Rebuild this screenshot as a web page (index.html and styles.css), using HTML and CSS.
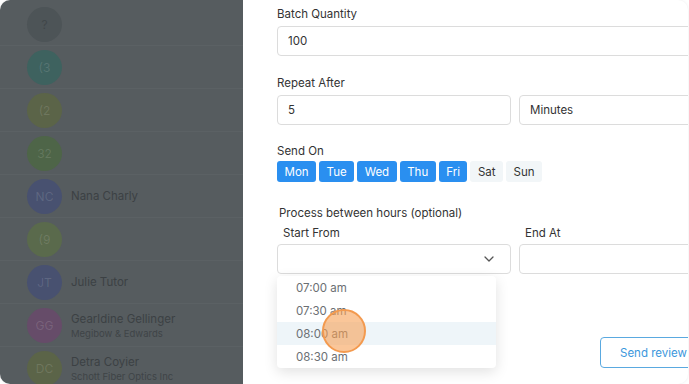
FILE: index.html
```html
<!DOCTYPE html>
<html lang="en">
<head>
  <meta charset="UTF-8">
  <meta name="viewport" content="width=device-width, initial-scale=1.0">
  <title>Send Review Requests</title>
  <link rel="stylesheet" href="styles.css">
</head>
<body>
  <div class="frame">
    <aside class="sidebar">
      <div class="contact"><span class="avatar a-gray">?</span></div>
      <div class="contact"><span class="avatar a-teal">(3</span></div>
      <div class="contact"><span class="avatar a-olive">(2</span></div>
      <div class="contact"><span class="avatar a-green">32</span></div>
      <div class="contact"><span class="avatar a-navy">NC</span><div class="who"><div class="name">Nana Charly</div></div></div>
      <div class="contact"><span class="avatar a-moss">(9</span></div>
      <div class="contact"><span class="avatar a-navy">JT</span><div class="who"><div class="name">Julie Tutor</div></div></div>
      <div class="contact"><span class="avatar a-purple">GG</span><div class="who"><div class="name">Gearldine Gellinger</div><div class="company">Megibow &amp; Edwards</div></div></div>
      <div class="contact"><span class="avatar a-olive">DC</span><div class="who"><div class="name">Detra Coyier</div><div class="company">Schott Fiber Optics Inc</div></div></div>
    </aside>

    <main class="panel">
      <form class="settings">
        <div class="field">
          <label class="label">Batch Quantity</label>
          <div class="input">100</div>
        </div>

        <div class="field">
          <label class="label">Repeat After</label>
          <div class="pair">
            <div class="input">5</div>
            <div class="input">Minutes</div>
          </div>
        </div>

        <div class="field days-field">
          <label class="label label-tight">Send On</label>
          <div class="days">
            <span class="day on">Mon</span>
            <span class="day on">Tue</span>
            <span class="day on">Wed</span>
            <span class="day on">Thu</span>
            <span class="day on">Fri</span>
            <span class="day">Sat</span>
            <span class="day">Sun</span>
          </div>
        </div>

        <div class="hours">
          <div class="label hours-title">Process between hours (optional)</div>
          <div class="pair">
            <div class="col">
              <label class="label sub">Start From</label>
              <div class="select-wrap">
                <div class="input select">
                  <svg class="chevron" width="10" height="6" viewBox="0 0 10 6"><path d="M1 1l4 4 4-4" fill="none" stroke="#555" stroke-width="1.3" stroke-linecap="round" stroke-linejoin="round"/></svg>
                </div>
                <ul class="menu">
                  <li>07:00 am</li>
                  <li>07:30 am</li>
                  <li class="hover">08:00 am</li>
                  <li>08:30 am</li>
                </ul>
              </div>
            </div>
            <div class="col">
              <label class="label sub">End At</label>
              <div class="input"></div>
            </div>
          </div>
        </div>

        <div class="actions">
          <button type="button" class="btn-outline">Send review requests</button>
        </div>
      </form>
    </main>

    <span class="cursor"></span>
  </div>
</body>
</html>
```

FILE: styles.css
```css
body {
  margin: 0;
  background: #fff;
  font-family: Inter, "Noto Sans", sans-serif;
}
.frame {
  position: relative;
  display: flex;
  width: 688px;
  height: 384px;
  border-radius: 10px;
  overflow: hidden;
  background: #fff;
  box-shadow: 0 0 3px rgba(0, 0, 0, 0.08);
}

/* contacts list behind the drawer */
.sidebar {
  width: 243px;
  flex-shrink: 0;
  background: #565c5f;
  padding-top: 3px;
}
.contact {
  display: flex;
  align-items: center;
  height: 42px;
  padding-left: 27px;
  border-bottom: 1px solid #5b6164;
}
.avatar {
  width: 35px;
  height: 35px;
  border-radius: 50%;
  display: flex;
  align-items: center;
  justify-content: center;
  font-size: 12px;
  color: rgba(255, 255, 255, 0.13);
  flex-shrink: 0;
}
.a-gray { background: #4d5457; color: #41474a; }
.a-teal { background: #3e625f; }
.a-olive { background: #5b6448; }
.a-green { background: #4e6548; }
.a-navy { background: #485170; }
.a-moss { background: #5a6a4c; }
.a-purple { background: #664c69; }
.who {
  margin-left: 9px;
}
.name {
  font-size: 11.5px;
  color: #3c4144;
}
.company {
  font-size: 9.5px;
  color: #3f4447;
  margin-top: 2px;
}

/* drawer */
.panel {
  flex: 1;
  padding: 6px 0 0 34px;
  overflow: hidden;
}
.settings {
  width: 442px;
}
.field {
  margin-bottom: 19px;
}
.label {
  display: block;
  font-size: 11.5px;
  line-height: 16px;
  color: #333;
  margin-bottom: 4px;
}
.label-tight {
  margin-bottom: 2px;
}
.days-field {
  margin-top: -1px;
  margin-bottom: 23px;
}
.input {
  box-sizing: border-box;
  height: 30px;
  border: 1px solid #dcdcdc;
  border-radius: 4px;
  padding: 0 10px;
  display: flex;
  align-items: center;
  font-size: 11.5px;
  color: #333;
  background: #fff;
}
.pair {
  display: grid;
  grid-template-columns: 234px 234px;
  gap: 8px;
}
.days {
  display: flex;
  gap: 3px;
}
.day {
  height: 21px;
  padding: 0 7.5px;
  border-radius: 3px;
  display: flex;
  align-items: center;
  font-size: 11.5px;
  color: #333;
  background: #f2f6f8;
}
.day.on {
  background: #2a8ff0;
  color: #fff;
}
.hours-title {
  margin-left: 2px;
}
.sub {
  margin-left: 6px;
  margin-bottom: 3px;
}
.select-wrap {
  position: relative;
}
.select {
  justify-content: flex-end;
  padding-right: 16px;
}
.chevron {
  display: block;
}
.menu {
  position: absolute;
  top: 32px;
  left: 0;
  width: 219px;
  margin: 0;
  padding: 0;
  list-style: none;
  background: #fff;
  border-radius: 4px;
  box-shadow: 0 4px 14px rgba(0, 0, 0, 0.12);
  overflow: hidden;
}
.menu li {
  height: 23px;
  line-height: 24px;
  padding-left: 19px;
  font-size: 11.5px;
  color: #6b6f73;
}
.menu li.hover {
  background: #eef5f9;
}
.actions {
  margin-top: 63px;
  padding-left: 323px;
}
.btn-outline {
  height: 31px;
  padding: 0 19px;
  border: 1px solid #5aa9e0;
  border-radius: 4px;
  background: #fff;
  color: #3c97dc;
  font-family: inherit;
  font-size: 11.5px;
  white-space: nowrap;
}

/* click indicator */
.cursor {
  position: absolute;
  left: 322px;
  top: 309px;
  width: 40px;
  height: 40px;
  border-radius: 50%;
  border: 2px solid #f39a4f;
  background: rgba(247, 160, 85, 0.6);
}
```
